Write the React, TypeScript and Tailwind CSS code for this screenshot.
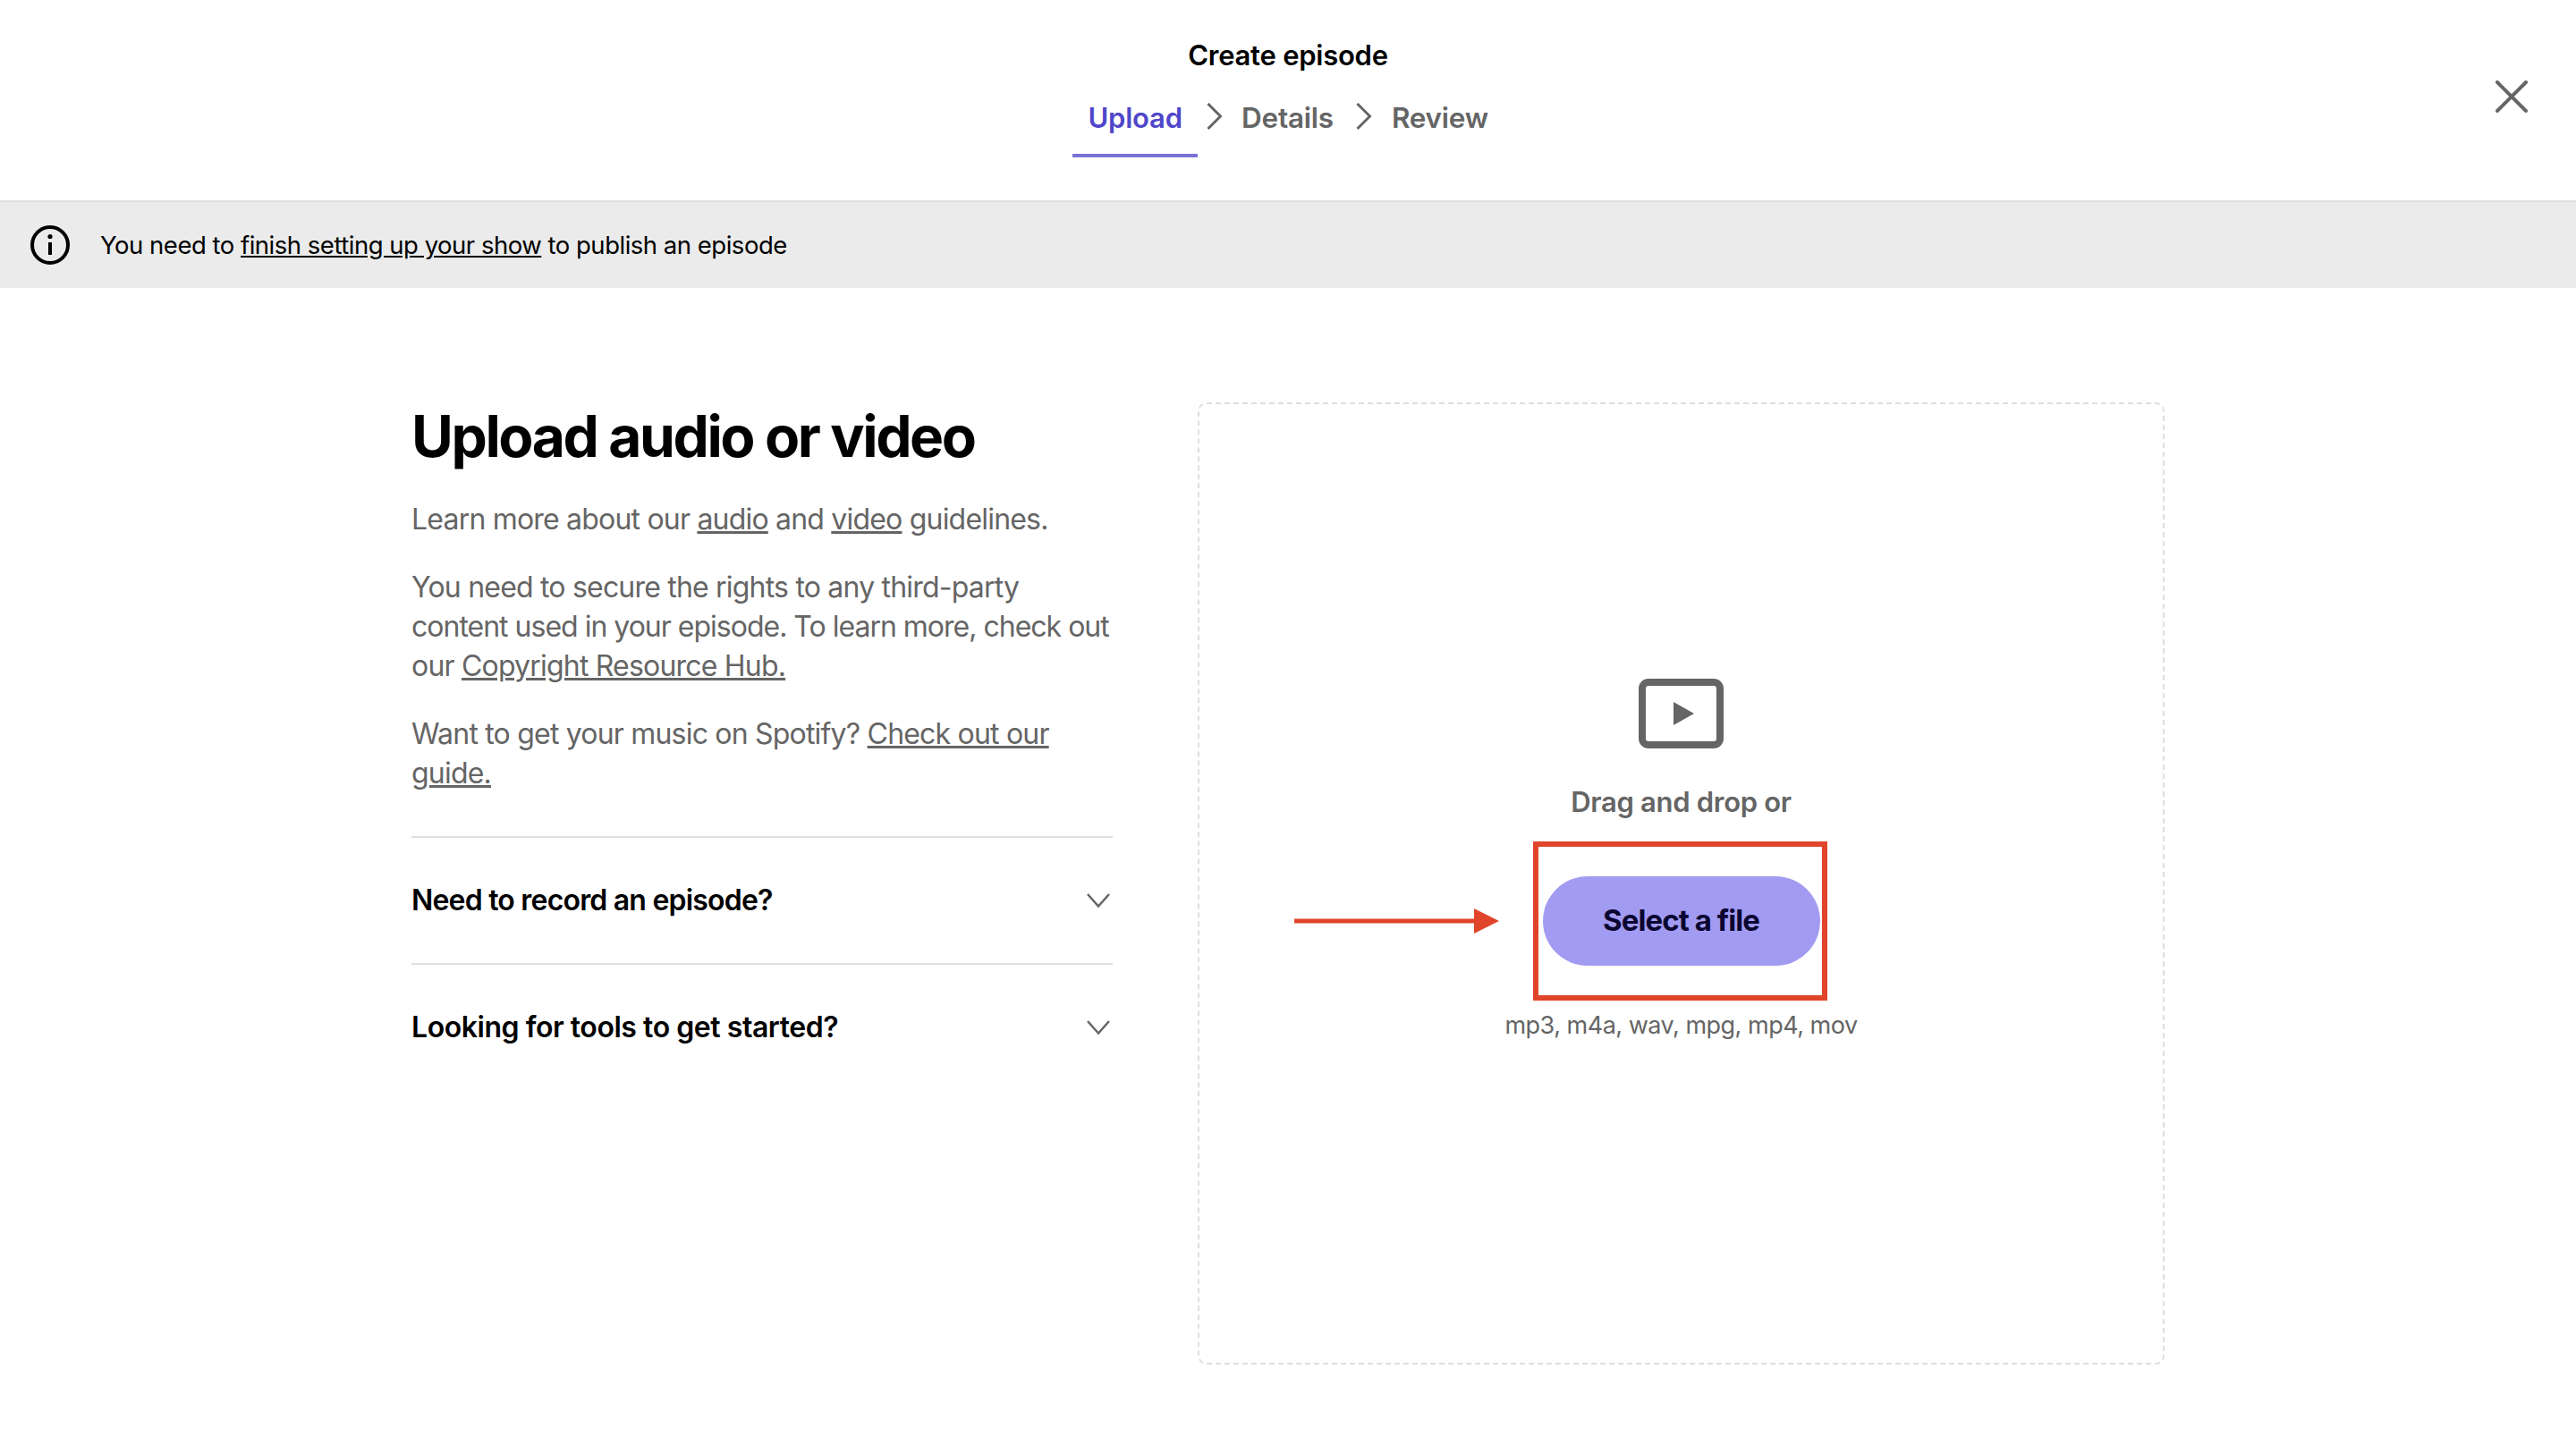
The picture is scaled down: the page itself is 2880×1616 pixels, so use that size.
export default function App() {
  return (
    <div className="relative w-full min-h-[1616px] bg-white text-black font-['Inter',sans-serif]">
      <header className="relative h-[226px] border-b-2 border-[#dedede] flex flex-col items-center">
        <h1 className="mt-[42px] h-[40px] text-[31px] leading-[40px] font-semibold tracking-[-0.25px]">Create episode</h1>
        <nav className="mt-[10px] flex items-start h-[84px]">
          <div className="w-[140px] h-[84px] border-b-4 border-[#7b70d8] flex justify-center">
            <span className="text-[31px] leading-[40px] mt-[20px] font-semibold text-[#4f46c9] tracking-[-0.2px]">Upload</span>
          </div>
          <svg className="ml-[10px] mt-[23px]" width="18" height="30" viewBox="0 0 18 30" fill="none" stroke="#656565" strokeWidth="3"><path d="M1.5 1 L15.5 15 L1.5 29" /></svg>
          <span className="ml-[21px] mt-[20px] text-[31.5px] leading-[40px] font-semibold text-[#656565] tracking-[-0.25px]">Details</span>
          <svg className="ml-[25px] mt-[23px]" width="18" height="30" viewBox="0 0 18 30" fill="none" stroke="#656565" strokeWidth="3"><path d="M1.5 1 L15.5 15 L1.5 29" /></svg>
          <span className="ml-[22px] mr-[17px] mt-[20px] text-[31.5px] leading-[40px] font-semibold text-[#656565] tracking-[-0.25px]">Review</span>
        </nav>
        <button className="absolute left-[2790px] top-[90px] w-[36px] h-[36px]">
          <svg width="36" height="36" viewBox="0 0 36 36" fill="none" stroke="#656565" strokeWidth="4" strokeLinecap="round"><path d="M2 2 L34 34 M34 2 L2 34" /></svg>
        </button>
      </header>

      <div className="h-[96px] bg-[#ebebeb] flex items-center pl-[34px]">
        <svg width="44" height="44" viewBox="0 0 44 44" fill="none" stroke="#000" strokeWidth="4">
          <circle cx="22" cy="22" r="20" />
          <path d="M22 19 V33" />
          <circle cx="22" cy="12.5" r="2.6" fill="#000" stroke="none" />
        </svg>
        <p className="ml-[34px] text-[27.5px] leading-[40px] tracking-[-0.49px]">
          You need to <a className="underline">finish setting up your show</a> to publish an episode
        </p>
      </div>

      <main className="flex pl-[460px] pt-[128px]">
        <section className="w-[784px] text-[#656565]">
          <h2 className="mt-[12px] text-[64px] leading-[52px] font-bold text-black tracking-[-2.4px]">Upload audio or video</h2>
          <p className="mt-[45px] text-[32px] leading-[44px] tracking-[-0.8px] whitespace-nowrap">
            Learn more about our <a className="underline">audio</a> and <a className="underline">video</a> guidelines.
          </p>
          <p className="mt-[32px] text-[32px] leading-[44px] tracking-[-0.8px] whitespace-nowrap">
            You need to secure the rights to any third-party<br />
            <span className="tracking-[-1px]">content used in your episode. To learn more, check out</span><br />
            our <a className="underline">Copyright Resource Hub.</a>
          </p>
          <p className="mt-[32px] text-[32px] leading-[44px] tracking-[-0.8px] whitespace-nowrap">
            Want to get your music on Spotify? <a className="underline">Check out our<br />guide.</a>
          </p>
          <div className="mt-[48px] border-t-2 border-[#dedede] h-[142px] flex items-center justify-between">
            <span className="text-[32px] font-semibold text-black tracking-[-0.8px]">Need to record an episode?</span>
            <svg className="mr-[3px]" width="26" height="16" viewBox="0 0 26 16" fill="none" stroke="#656565" strokeWidth="2.5"><path d="M1 1 L13 14.5 L25 1" /></svg>
          </div>
          <div className="border-t-2 border-[#dedede] h-[142px] flex items-center justify-between">
            <span className="text-[32px] font-semibold text-black tracking-[-0.45px]">Looking for tools to get started?</span>
            <svg className="mr-[3px]" width="26" height="16" viewBox="0 0 26 16" fill="none" stroke="#656565" strokeWidth="2.5"><path d="M1 1 L13 14.5 L25 1" /></svg>
          </div>
        </section>

        <section className="ml-[95px] w-[1081px] h-[1076px] rounded-[10px] border-2 border-dashed border-[#dedede] flex flex-col items-center pt-[307px]">
          <svg width="95" height="78" viewBox="0 0 95 78" fill="none">
            <rect x="4" y="4" width="87" height="70" rx="7" stroke="#656565" strokeWidth="8" />
            <path d="M39 26 L62 39 L39 52 Z" fill="#656565" />
          </svg>
          <p className="mt-[40px] text-[31px] leading-[40px] font-semibold text-[#656565] tracking-[-0.3px]">Drag and drop or</p>
          <div className="relative mt-[63px]">
            <button className="block w-[310px] h-[100px] rounded-full bg-[#a29bf2] text-[33px] font-bold text-[#0a0630] tracking-[-0.95px]">Select a file</button>
            <div className="absolute -left-[11px] -top-[39px] w-[329px] h-[178px] border-[6px] border-[#e0452b]" />
            <svg className="absolute -left-[278px] top-[36px]" width="230" height="28" viewBox="0 0 230 28" fill="#e0452b">
              <rect x="0" y="11.5" width="204" height="5" />
              <path d="M201 0 L229 14 L201 28 Z" />
            </svg>
          </div>
          <p className="mt-[47px] text-[27px] leading-[40px] text-[#656565] tracking-[-0.5px]">mp3, m4a, wav, mpg, mp4, mov</p>
        </section>
      </main>
    </div>
  );
}
